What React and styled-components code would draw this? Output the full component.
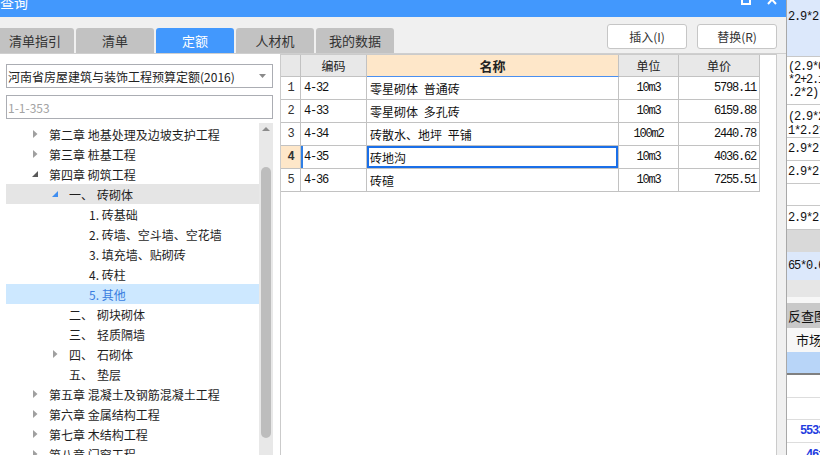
import React from "react";
import styled, { createGlobalStyle } from "styled-components";

const GlobalStyle = createGlobalStyle`
  html, body {
    margin: 0;
    padding: 0;
    overflow: hidden;
    background: #f0f0f0;
  }
  body {
    font-family: "Noto Sans CJK SC", "Noto Sans", sans-serif;
    font-size: 12px;
    color: #222;
  }
`;

const MONO = `"Liberation Mono", "DejaVu Sans Mono", "Noto Sans CJK SC", monospace`;

const Screen = styled.div`
  display: flex;
  width: 820px;
  height: 455px;
  overflow: hidden;
`;

const Dialog = styled.div`
  width: 786px;
  flex: none;
  display: flex;
  flex-direction: column;
  background: #f0f0f0;
`;

const TitleBar = styled.div`
  height: 17px;
  flex: none;
  display: flex;
  align-items: flex-start;
  background: #4298fd;
  color: #fff;
  overflow: hidden;
`;

const Title = styled.span`
  flex: 1;
  font-size: 14px;
  line-height: 20px;
  margin-top: -8px;
`;

const WinIcons = styled.div`
  display: flex;
  gap: 16px;
  padding-right: 9px;
  margin-top: -6px;
`;

const TopBar = styled.div`
  height: 36px;
  flex: none;
  display: flex;
  justify-content: space-between;
  align-items: flex-start;
  border-bottom: 1px solid #cfcfcf;
  padding-right: 9px;
`;

const Tabs = styled.div`
  display: flex;
  gap: 2px;
  margin-left: -4px;
  align-self: flex-end;
`;

const Tab = styled.div`
  width: 78px;
  height: 25px;
  display: flex;
  align-items: center;
  justify-content: center;
  border-radius: 3px 3px 0 0;
  font-size: 13px;
  background: ${(p) => (p.$active ? "#4298fd" : "#c2c2c2")};
  color: ${(p) => (p.$active ? "#fff" : "#333")};
`;

const Actions = styled.div`
  display: flex;
  gap: 10px;
  margin-top: 7px;
`;

const Button = styled.div`
  width: 80px;
  height: 25px;
  box-sizing: border-box;
  display: flex;
  align-items: center;
  justify-content: center;
  background: #fff;
  border: 1px solid #c6c6c6;
  border-radius: 3px;
  font-size: 12px;
  color: #333;
`;

const Body = styled.div`
  flex: 1;
  min-height: 0;
  display: flex;
`;

const LeftPanel = styled.div`
  width: 280px;
  flex: none;
  box-sizing: border-box;
  background: #fff;
  padding: 10px 7px 0 6px;
  display: flex;
  flex-direction: column;
`;

const Select = styled.div`
  height: 24px;
  box-sizing: border-box;
  border: 1px solid #abadb3;
  padding: 0 6px 0 1px;
  display: flex;
  align-items: center;
  justify-content: space-between;
  font-size: 12px;
  color: #222;
`;

const SearchInput = styled.input`
  height: 24px;
  margin-top: 7px;
  box-sizing: border-box;
  border: 1px solid #abadb3;
  padding: 0 1px;
  font-family: inherit;
  font-size: 12px;
  outline: none;
  &::placeholder {
    color: #a3a3a3;
  }
`;

const Tree = styled.div`
  flex: 1;
  min-height: 0;
  margin-top: 4px;
  display: flex;
  overflow: hidden;
`;

const TreeList = styled.div`
  flex: 1;
  padding-top: 1px;
`;

const TreeRow = styled.div`
  height: 20px;
  display: flex;
  align-items: center;
  padding-left: ${(p) => 22 + p.$level * 20}px;
  background: ${(p) =>
    p.$state === "hover" ? "#e5e5e5" : p.$state === "selected" ? "#cde8ff" : "transparent"};
  color: ${(p) => (p.$state === "selected" ? "#3a7ee0" : "#1e1e1e")};
  white-space: nowrap;
`;

const Caret = styled.span`
  width: 14px;
  margin-right: 7px;
  display: flex;
  justify-content: center;
  align-items: center;
`;

const SectionNo = styled.span`
  width: 28px;
`;

const Scrollbar = styled.div`
  width: 14px;
  flex: none;
  background: #e8e8e8;
  display: flex;
  flex-direction: column;
  align-items: center;
  padding-top: 4px;
`;

const Thumb = styled.div`
  width: 10px;
  height: 271px;
  margin-top: 36px;
  border-radius: 5px;
  background: #bdbdbd;
`;

const TablePanel = styled.div`
  flex: 1;
  display: flex;
  padding-right: 9px;
`;

const TableBox = styled.div`
  flex: 1;
  background: #fff;
  border: 1px solid #cbcbcb;
  border-bottom: none;
`;

const GridRow = styled.div`
  display: grid;
  grid-template-columns: 20px 66px 252px 60px 81px;
  height: ${(p) => (p.$head ? 22 : 23)}px;
`;

const HeadCell = styled.div`
  box-sizing: border-box;
  display: flex;
  align-items: center;
  justify-content: center;
  border-right: 1px solid #c2c2c2;
  border-bottom: 1px solid ${(p) => (p.$accent ? "#4a8ff0" : "#c2c2c2")};
  background: ${(p) => (p.$accent ? "#fee7c9" : "#e8e8e8")};
  font-size: ${(p) => (p.$accent ? 13 : 12)}px;
  font-weight: ${(p) => (p.$accent ? 700 : 400)};
  color: #222;
`;

const Cell = styled.div`
  box-sizing: border-box;
  display: flex;
  align-items: center;
  justify-content: ${(p) => p.$align || "flex-start"};
  padding: 0 3px;
  border-right: 1px solid #c2c2c2;
  border-bottom: 1px solid #c2c2c2;
  font-family: ${(p) => (p.$mono ? MONO : "inherit")};
  letter-spacing: ${(p) => (p.$mono ? "-1.2px" : "normal")};
  font-size: 12px;
  color: #111;
  white-space: pre;
`;

const NumCell = styled(Cell)`
  justify-content: center;
  background: ${(p) => (p.$current ? "#fee7c9" : "#fff")};
  font-weight: ${(p) => (p.$current ? 700 : 400)};
  color: #333;
`;

const CodeCell = styled(Cell)`
  box-shadow: ${(p) => (p.$current ? "inset 2px 0 0 #2f7fe6" : "none")};
`;

const NameCell = styled(Cell)`
  word-spacing: 3px;
  box-shadow: ${(p) => (p.$current ? "inset 0 0 0 2px #1a6fe8" : "none")};
`;

const AppSide = styled.div`
  flex: 1;
  border-left: 1px solid #a8a8a8;
  background: #fff;
  overflow: hidden;
  display: flex;
  flex-direction: column;
`;

const SideCell = styled.div`
  height: ${(p) => p.$h}px;
  flex: none;
  box-sizing: border-box;
  background: ${(p) => p.$bg || "#fff"};
  border-bottom: ${(p) => (p.$line ? `${p.$line}` : "none")};
  padding: ${(p) => p.$pad || "0 0 0 1px"};
  display: flex;
  flex-direction: column;
  justify-content: ${(p) => (p.$top ? "flex-start" : "center")};
  font-family: ${(p) => (p.$cjk ? "inherit" : MONO)};
  letter-spacing: ${(p) => (p.$cjk ? "normal" : "-1.2px")};
  font-size: ${(p) => (p.$cjk ? 13 : 12)}px;
  line-height: ${(p) => p.$lh || 14}px;
  font-weight: ${(p) => (p.$bold ? 700 : 400)};
  color: ${(p) => p.$color || "#111"};
  white-space: nowrap;
`;

const tabs = ["清单指引", "清单", "定额", "人材机", "我的数据"];

const tree = [
  { level: 0, caret: "closed", text: "第二章 地基处理及边坡支护工程" },
  { level: 0, caret: "closed", text: "第三章 桩基工程" },
  { level: 0, caret: "open", text: "第四章 砌筑工程" },
  { level: 1, caret: "openBlue", no: "一、", text: "砖砌体", state: "hover" },
  { level: 2, text: "1. 砖基础" },
  { level: 2, text: "2. 砖墙、空斗墙、空花墙" },
  { level: 2, text: "3. 填充墙、贴砌砖" },
  { level: 2, text: "4. 砖柱" },
  { level: 2, text: "5. 其他", state: "selected" },
  { level: 1, no: "二、", text: "砌块砌体" },
  { level: 1, no: "三、", text: "轻质隔墙" },
  { level: 1, caret: "closed", no: "四、", text: "石砌体" },
  { level: 1, no: "五、", text: "垫层" },
  { level: 0, caret: "closed", text: "第五章 混凝土及钢筋混凝土工程" },
  { level: 0, caret: "closed", text: "第六章 金属结构工程" },
  { level: 0, caret: "closed", text: "第七章 木结构工程" },
  { level: 0, caret: "closed", text: "第八章 门窗工程" },
];

const rows = [
  { code: "4-32", name: "零星砌体 普通砖", unit: "10m3", price: "5798.11" },
  { code: "4-33", name: "零星砌体 多孔砖", unit: "10m3", price: "6159.88" },
  { code: "4-34", name: "砖散水、地坪 平铺", unit: "100m2", price: "2440.78" },
  { code: "4-35", name: "砖地沟", unit: "10m3", price: "4036.62" },
  { code: "4-36", name: "砖碹", unit: "10m3", price: "7255.51" },
];

const CaretIcon = ({ type }) => {
  if (type === "closed")
    return (
      <svg width="5" height="8" viewBox="0 0 5 8">
        <polygon points="0,0 4.5,4 0,8" fill="#a0a0a0" />
      </svg>
    );
  return (
    <svg width="6" height="6" viewBox="0 0 6 6">
      <polygon points="6,0 6,6 0,6" fill={type === "openBlue" ? "#3f8ef0" : "#595959"} />
    </svg>
  );
};

const line = "1px solid #c8c8c8";

export default function App() {
  return (
    <>
      <GlobalStyle />
      <Screen>
        <Dialog>
          <TitleBar>
            <Title>查询</Title>
            <WinIcons>
              <svg width="10" height="11" viewBox="0 0 10 11">
                <rect x="1" y="1" width="8" height="9" fill="none" stroke="#fff" strokeWidth="2" />
              </svg>
              <svg width="10" height="11" viewBox="0 0 10 11">
                <path d="M1 1 L9 10 M9 1 L1 10" stroke="#fff" strokeWidth="2" />
              </svg>
            </WinIcons>
          </TitleBar>

          <TopBar>
            <Tabs>
              {tabs.map((t) => (
                <Tab key={t} $active={t === "定额"}>
                  {t}
                </Tab>
              ))}
            </Tabs>
            <Actions>
              <Button>插入(I)</Button>
              <Button>替换(R)</Button>
            </Actions>
          </TopBar>

          <Body>
            <LeftPanel>
              <Select>
                <span>河南省房屋建筑与装饰工程预算定额(2016)</span>
                <svg width="7" height="4" viewBox="0 0 7 4">
                  <polygon points="0,0 7,0 3.5,4" fill="#8a8a8a" />
                </svg>
              </Select>
              <SearchInput placeholder="1-1-353" />
              <Tree>
                <TreeList>
                  {tree.map((n, i) => (
                    <TreeRow key={i} $level={n.level} $state={n.state}>
                      <Caret>{n.caret && <CaretIcon type={n.caret} />}</Caret>
                      {n.no && <SectionNo>{n.no}</SectionNo>}
                      <span>{n.text}</span>
                    </TreeRow>
                  ))}
                </TreeList>
                <Scrollbar>
                  <svg width="8" height="4" viewBox="0 0 8 4">
                    <polygon points="0,4 8,4 4,0" fill="#8c8c8c" />
                  </svg>
                  <Thumb />
                </Scrollbar>
              </Tree>
            </LeftPanel>

            <TablePanel>
              <TableBox>
                <GridRow $head>
                  <HeadCell />
                  <HeadCell>编码</HeadCell>
                  <HeadCell $accent>名称</HeadCell>
                  <HeadCell>单位</HeadCell>
                  <HeadCell>单价</HeadCell>
                </GridRow>
                {rows.map((r, i) => {
                  const current = i === 3;
                  return (
                    <GridRow key={r.code}>
                      <NumCell $mono $current={current}>
                        {i + 1}
                      </NumCell>
                      <CodeCell $mono $current={current}>
                        {r.code}
                      </CodeCell>
                      <NameCell $current={current}>{r.name}</NameCell>
                      <Cell $mono $align="center">
                        {r.unit}
                      </Cell>
                      <Cell $mono $align="flex-end">
                        {r.price}
                      </Cell>
                    </GridRow>
                  );
                })}
              </TableBox>
            </TablePanel>
          </Body>
        </Dialog>

        <AppSide>
          <SideCell $h={57} $bg="#dce8fb" $line={line} $top $pad="10px 0 0 1px">
            2.9*2.2
          </SideCell>
          <SideCell $h={48} $line={line} $top $lh={13} $pad="4px 0 0 1px">
            <span>(2.9*0.6</span>
            <span>*2+2.1*</span>
            <span>.2*2)</span>
          </SideCell>
          <SideCell $h={33} $line={line} $top $pad="5px 0 0 1px">
            <span>(2.9*2.</span>
            <span>1*2.2*</span>
          </SideCell>
          <SideCell $h={23} $line={line}>2.9*2.2</SideCell>
          <SideCell $h={23} $line={line}>2.9*2.2</SideCell>
          <SideCell $h={22} $line={line} />
          <SideCell $h={24} $line={line}>2.9*2.2</SideCell>
          <SideCell $h={22} $bg="#d9d9d9" />
          <SideCell $h={28} $bg="#dce8fb">65*0.65</SideCell>
          <SideCell $h={17} $bg="#e6e6e6" />
          <SideCell $h={6} $bg="#f7f7f7" />
          <SideCell $h={25} $bg="#c9c9c9" $cjk>
            反查图
          </SideCell>
          <SideCell $h={24} $bg="#f7f7f7" $cjk $pad="0 0 0 9px">
            市场价
          </SideCell>
          <SideCell $h={23} $bg="#b8d5f8" $line="2px solid #808080" />
          <SideCell $h={23} $line="1px solid #dddddd" />
          <SideCell $h={22} $line="1px solid #dddddd" />
          <SideCell $h={23} $line="1px solid #dddddd" $bold $color="#1f3de0" $pad="0 0 0 13px">
            5533.2
          </SideCell>
          <SideCell $h={23} $bold $color="#1f3de0" $pad="0 0 0 19px">
            461.5
          </SideCell>
        </AppSide>
      </Screen>
    </>
  );
}
